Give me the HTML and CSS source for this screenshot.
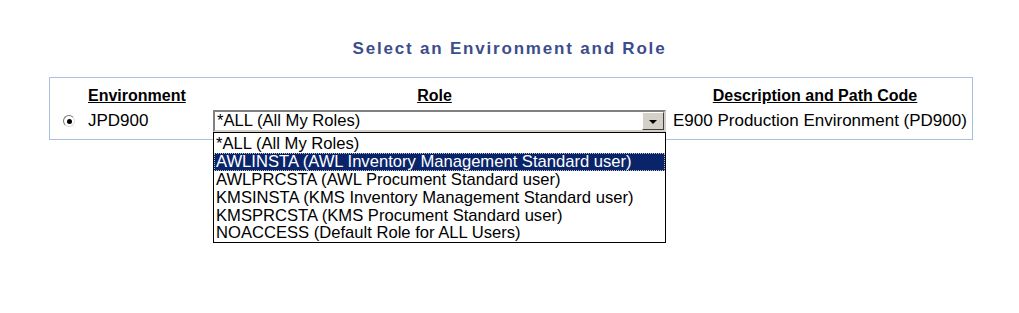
FILE: index.html
```html
<!DOCTYPE html>
<html lang="en">
<head>
    <meta charset="UTF-8">
    <meta name="viewport" content="width=device-width, initial-scale=1.0">
    <title>Select Environment</title>
    <link rel="stylesheet" href="styles.css">
</head>
<body>
    <h1 class="title">Select an Environment and Role</h1>
    <div class="env-box">
        <div class="env-grid">
            <div></div>
            <div class="col-head left">Environment</div>
            <div class="col-head role-head">Role</div>
            <div class="col-head desc-head">Description and Path Code</div>

            <div class="radio-cell"><span class="radio"><span class="dot"></span></span></div>
            <div class="cell">JPD900</div>
            <div class="role-cell">
                <div class="combo">
                    <span class="combo-value">*ALL (All My Roles)</span>
                    <span class="combo-btn"><span class="arrow"></span></span>
                </div>
                <ul class="combo-list">
                    <li>*ALL (All My Roles)</li>
                    <li class="selected">AWLINSTA (AWL Inventory Management Standard user)</li>
                    <li>AWLPRCSTA (AWL Procument Standard user)</li>
                    <li>KMSINSTA (KMS Inventory Management Standard user)</li>
                    <li>KMSPRCSTA (KMS Procument Standard user)</li>
                    <li>NOACCESS (Default Role for ALL Users)</li>
                </ul>
            </div>
            <div class="cell desc">E900 Production Environment (PD900)</div>
        </div>
    </div>
</body>
</html>
```

FILE: styles.css
```css
html, body {
    min-height: 313px;
}
body {
    margin: 0;
    font-family: "Liberation Sans", Arial, sans-serif;
    background: #fff;
    color: #000;
}
.title {
    margin: 39px 0 0;
    text-align: center;
    font-size: 17px;
    letter-spacing: 1.8px;
    color: #3c4d8c;
    line-height: 20px;
}
.env-box {
    margin: 18px 46px 0 49px;
    border: 1px solid #aac0e0;
    padding: 0 0 7px 11px;
}
.env-grid {
    display: grid;
    grid-template-columns: 27px 125px 453px auto;
    padding-top: 9px;
}
.col-head {
    font-weight: bold;
    font-size: 16px;
    text-decoration: underline;
    text-align: center;
    line-height: 18px;
    height: 23px;
    white-space: nowrap;
}
.col-head.left {
    text-align: left;
}
.role-head {
    padding-right: 10px;
}
.desc-head {
    padding-right: 8px;
}
.radio-cell, .cell {
    display: flex;
    align-items: center;
    font-size: 17px;
    height: 22px;
    white-space: nowrap;
}
.desc {
    padding-left: 7px;
}
.radio {
    width: 12px;
    height: 12px;
    border-radius: 50%;
    border: 1px solid #777;
    border-right-color: #ddd;
    border-bottom-color: #ddd;
    box-sizing: border-box;
    display: flex;
    align-items: center;
    justify-content: center;
    margin-left: 2px;
}
.dot {
    width: 5px;
    height: 5px;
    border-radius: 50%;
    background: #000;
}
.role-cell {
    position: relative;
    z-index: 2;
}
.combo {
    height: 22px;
    box-sizing: border-box;
    border: 2px solid #808080;
    border-right-color: #d4d0c8;
    border-bottom-color: #d4d0c8;
    display: flex;
    align-items: center;
    background: #fff;
}
.combo-value {
    flex: 1;
    font-size: 16.6px;
    padding-left: 2px;
}
.combo-btn {
    width: 22px;
    height: 18px;
    background: #d4d0c8;
    border: 1px solid;
    border-color: #fff #404040 #404040 #fff;
    box-sizing: border-box;
    display: flex;
    align-items: center;
    justify-content: center;
}
.arrow {
    width: 0;
    height: 0;
    border-left: 4px solid transparent;
    border-right: 4px solid transparent;
    border-top: 4px solid #000;
    margin-top: 1px;
}
.combo-list {
    position: absolute;
    top: 22px;
    left: 0;
    right: 0;
    margin: 0;
    padding: 2px 0 0;
    list-style: none;
    background: #fff;
    border: 1px solid #000;
    font-size: 16.6px;
}
.combo-list li {
    line-height: 17.9px;
    height: 17.9px;
    padding-left: 2px;
    white-space: nowrap;
}
.combo-list li.selected {
    background: #0a246a;
    color: #fff;
    outline: 1px dotted #c0c0c0;
    outline-offset: -1px;
}
```
